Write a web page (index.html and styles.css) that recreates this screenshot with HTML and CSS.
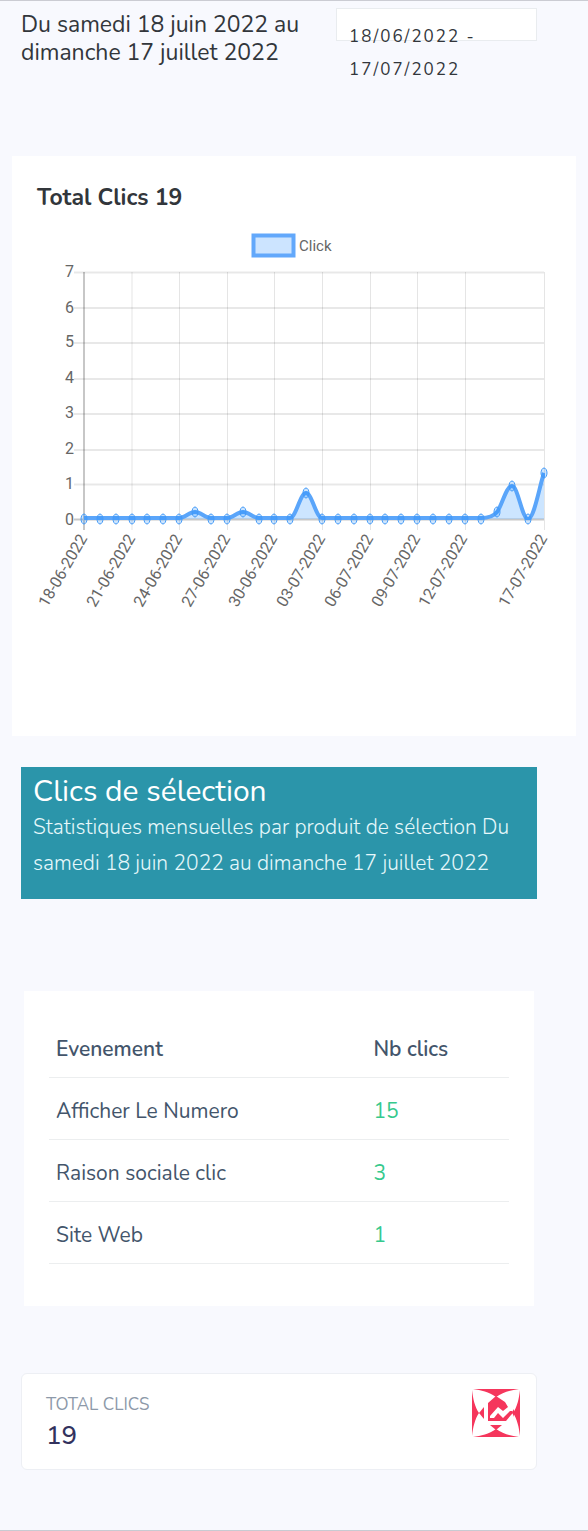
FILE: index.html
```
<!DOCTYPE html>
<html lang="fr">
<head>
<meta charset="utf-8">
<meta name="viewport" content="width=device-width, initial-scale=1">
<title>Statistiques des clics</title>
<link rel="stylesheet" href="styles.css">
</head>
<body>
<main class="page">
  <header class="period">
    <h1 class="period-title">Du samedi 18 juin 2022 au dimanche 17 juillet 2022</h1>
    <button class="date-range" type="button">18/06/2022 - 17/07/2022</button>
  </header>

  <section class="chart-card">
    <h2 class="chart-title">Total Clics 19</h2>
    <svg class="chart" viewBox="0 0 514 392" role="img" aria-label="Click">
      <defs>
        <marker id="dot" markerUnits="userSpaceOnUse" markerWidth="10" markerHeight="14" refX="5" refY="7">
          <ellipse class="dot" cx="5" cy="7" rx="3" ry="5"/>
        </marker>
        <clipPath id="plot"><rect x="47" y="40" width="461" height="250"/></clipPath>
      </defs>
      <rect class="swatch" x="216.500" y="5.500" width="40" height="20"/>
      <text class="label legend" x="262" y="21">Click</text>
      <path class="grid" d="M37 42.500H507M37 78H507M37 113H507M37 149H507M37 184H507M37 220H507M37 254.500H507"/>
      <path class="grid-v" d="M95 42V300M142.500 42V300M190.500 42V300M237.500 42V300M285.500 42V300M333.500 42V300M380.500 42V300M428.500 42V300M507.500 42V300"/>
      <path class="axis" d="M47 42V300M37 289.500H507"/>
      <g class="label ticks">
        <text x="37" y="47">7</text><text x="37" y="83">6</text><text x="37" y="117">5</text><text x="37" y="153">4</text>
        <text x="37" y="188">3</text><text x="37" y="224">2</text><text x="37" y="259">1</text><text x="37" y="295">0</text>
      </g>
      <g clip-path="url(#plot)">
        <path class="area" d="M47 289H142C148 289 152 282 158 282S168 289 174 289H190C196 289 200 282 206 282S216 289 222 289H253C259 289 263 263 269 263S279 289 285 289H444C450 289 456 287 460 282C465 276 469 256 475 256S485 289 491 289S502 258 507 243V289Z"/>
        <path class="line" d="M47 288H142C148 288 152 282 158 282S168 288 174 288H190C196 288 200 282 206 282S216 288 222 288H253C259 288 263 263 269 263S279 288 285 288H444C450 288 456 287 460 282C465 276 469 256 475 256S485 289 491 289S502 258 507 243"/>
      </g>
      <path class="points" d="M47 289L63 289L79 289L95 289L110 289L126 289L142 289L158 282L174 289L190 289L206 282L222 289L237 289L253 289L269 263L285 289L301 289L317 289L333 289L348 289L364 289L380 289L396 289L412 289L428 289L444 289L460 282L475 256L491 289L507 243"/>
      <g class="label dates">
        <text transform="translate(47 306) rotate(-60)">18-06-2022</text>
        <text transform="translate(95 306) rotate(-60)">21-06-2022</text>
        <text transform="translate(142 306) rotate(-60)">24-06-2022</text>
        <text transform="translate(190 306) rotate(-60)">27-06-2022</text>
        <text transform="translate(237 306) rotate(-60)">30-06-2022</text>
        <text transform="translate(285 306) rotate(-60)">03-07-2022</text>
        <text transform="translate(333 306) rotate(-60)">06-07-2022</text>
        <text transform="translate(380 306) rotate(-60)">09-07-2022</text>
        <text transform="translate(427 306) rotate(-60)">12-07-2022</text>
        <text transform="translate(507 306) rotate(-60)">17-07-2022</text>
      </g>
    </svg>
  </section>

  <section class="banner">
    <h2 class="banner-title">Clics de sélection</h2>
    <p class="banner-text">Statistiques mensuelles par produit de sélection Du samedi 18 juin 2022 au dimanche 17 juillet 2022</p>
  </section>

  <section class="table-card">
    <table class="events">
      <thead><tr><th scope="col">Evenement</th><th scope="col">Nb clics</th></tr></thead>
      <tbody>
        <tr><td>Afficher Le Numero</td><td class="count">15</td></tr>
        <tr><td>Raison sociale clic</td><td class="count">3</td></tr>
        <tr><td>Site Web</td><td class="count">1</td></tr>
      </tbody>
    </table>
  </section>

  <section class="total-card">
    <div>
      <h3 class="total-label">TOTAL CLICS</h3>
      <p class="total-value">19</p>
    </div>
    <svg class="total-icon" viewBox="0 0 48 48" aria-hidden="true">
      <g fill="#f5365c">
        <path d="M1 0H47C39 1 31 3 24 8C17 3 9 1 1 0Z"/>
        <path d="M1 48H47C39 47 31 45 24 40C17 45 9 47 1 48Z"/>
        <path d="M0 1C1 10 3 18 7 24C3 30 1 38 0 47Z"/>
        <path d="M48 1C47 10 45 18 41 24C45 30 47 38 48 47Z"/>
        <path d="M24 7L33 13L36 18L31 22L26 18L18 27V29H22L26 24L31 29L38 22L40 22L41 24L39 26L34 32H16V14Z"/>
        <path d="M7 24L12 18V30Z"/>
        <path d="M18 36H30L24 41Z"/>
        <path d="M40 23L42 20V28Z"/>
      </g>
    </svg>
  </section>
</main>
</body>
</html>
```
FILE: styles.css
```
* { box-sizing: border-box; }

body {
  margin: 0;
  background: #f8f9fe;
  color: #32363b;
  font-family: Nunito, Lato, "Open Sans", sans-serif;
}

h1, h2, h3, p { margin: 0; font-weight: 400; }

.page {
  border-top: 1px solid #cbccd3;
  border-bottom: 1px solid #c8cbd2;
  padding: 7px 51px 60px 21px;
}

.period {
  display: grid;
  grid-template-columns: minmax(0, 315fr) minmax(0, 201fr);
  align-items: start;
}
.period-title {
  padding: 3px 24px 0 0;
  font-size: 23px;
  line-height: 28px;
}
.date-range {
  display: flex;
  align-items: flex-start;
  height: 33px;
  padding: 11px 12px;
  border: 1px solid #e9ecef;
  background: #fff;
  color: #32363b;
  font: 17px/33px Nunito, Lato, "Open Sans", sans-serif;
  letter-spacing: 2px;
  text-align: left;
}

.chart-card {
  margin: 89px -39px 0 -9px;
  padding: 25px 25px 114px;
  background: #fff;
}
.chart-title {
  font-size: 23px;
  font-weight: 700;
  line-height: 33px;
  margin-bottom: 16px;
}
.chart { display: block; width: 100%; overflow: visible; }
.label {
  fill: #666;
  font-family: Roboto, sans-serif;
  font-size: 16px;
}
.legend { font-size: 15px; }
.ticks, .dates { text-anchor: end; }
.dates text { dominant-baseline: middle; }
.grid, .grid-v, .axis { fill: none; stroke: #000; }
.grid { stroke-opacity: .09; stroke-width: 2; }
.grid-v { stroke-opacity: .1; }
.axis { stroke-opacity: .22; stroke-width: 2; }
.swatch { fill: #cce4ff; stroke: #62a8fb; stroke-width: 4; }
.area { fill: #007bff; fill-opacity: .2; }
.line { fill: none; stroke: #5aa5fa; stroke-width: 4; }
.dot { fill: #007bff; fill-opacity: .2; stroke: #459bf8; }
.points { fill: none; marker: url(#dot); }

.banner {
  margin-top: 31px;
  padding: 8px 12px 18px;
  background: #2b95aa;
  color: #fff;
}
.banner-title { font-size: 30px; line-height: 34px; }
.banner-text { color: #e6f8fb; font-size: 21px; font-weight: 300; line-height: 36px; }

.table-card {
  margin: 92px 3px 0;
  padding: 25px 25px 42px;
  background: #fff;
}
.events {
  width: 100%;
  border-collapse: collapse;
  table-layout: fixed;
  color: #43556b;
  font-size: 21px;
  line-height: 30px;
}
.events th, .events td {
  padding: 18px 7px 13px;
  border-bottom: 1px solid #eceeef;
  text-align: left;
  font-weight: 400;
}
.events th { font-weight: 600; width: 69%; }
.events th + th { width: 31%; }
.events .count { color: #36c98d; }

.total-card {
  display: flex;
  justify-content: space-between;
  align-items: flex-start;
  margin-top: 67px;
  padding: 15px 16px 14px 24px;
  border: 1px solid #edeff4;
  border-radius: 6px;
  background: #fff;
}
.total-label { padding-top: 4px; color: #8d99a9; font-size: 17px; line-height: 24px; }
.total-value { color: #32325d; font-size: 26px; font-weight: 500; line-height: 38px; }
.total-icon { width: 48px; height: 48px; }
```
